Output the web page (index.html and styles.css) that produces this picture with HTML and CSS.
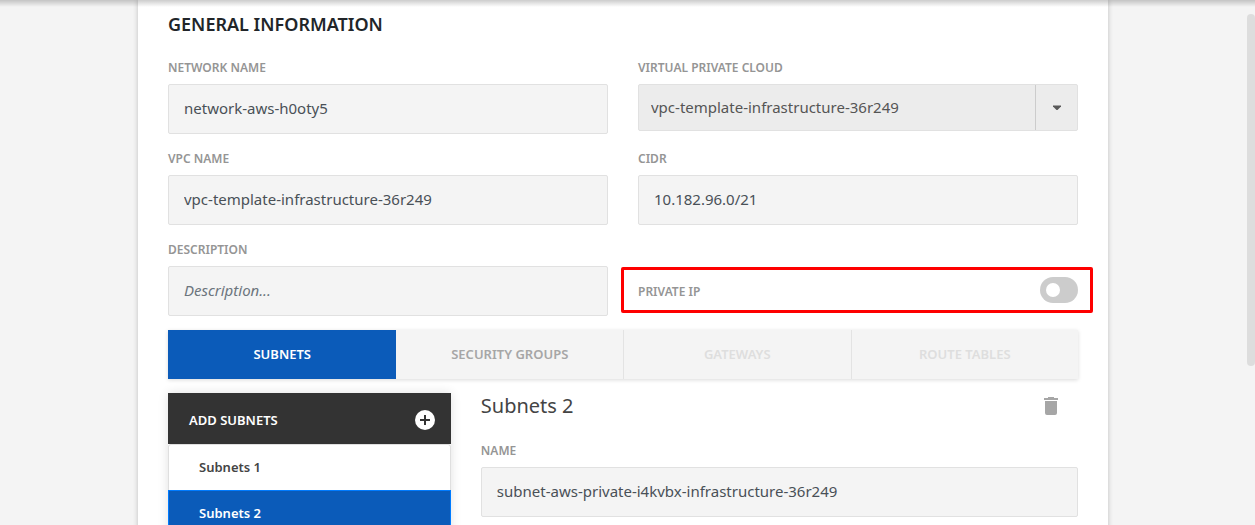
FILE: index.html
```html
<!DOCTYPE html>
<html lang="en">
<head>
<meta charset="utf-8">
<title>General information</title>
<link rel="stylesheet" href="styles.css">
</head>
<body>
<div class="page">
  <main class="card">
    <h2 class="title">General information</h2>
    <form class="fields">
      <div class="field">
        <label class="label" for="network">Network name</label>
        <input class="input" id="network" type="text" value="network-aws-h0oty5">
      </div>
      <div class="field">
        <label class="label" for="vpc">Virtual private cloud</label>
        <div class="picker">
          <select class="select" id="vpc"><option>vpc-template-infrastructure-36r249</option></select>
          <span class="picker-arrow"><svg width="10" height="6" viewBox="0 0 10 6"><path d="M1 .5h8v1L5.500 5h-1L1 1.500z" fill="#595959"/></svg></span>
        </div>
      </div>
      <div class="field">
        <label class="label" for="vpcname">VPC name</label>
        <input class="input" id="vpcname" type="text" value="vpc-template-infrastructure-36r249">
      </div>
      <div class="field">
        <label class="label" for="cidr">CIDR</label>
        <input class="input" id="cidr" type="text" value="10.182.96.0/21">
      </div>
      <div class="field">
        <label class="label" for="description">Description</label>
        <input class="input" id="description" type="text" placeholder="Description...">
      </div>
      <div class="toggle-row">
        <label class="toggle-label" for="private">Private IP</label>
        <input class="toggle" id="private" type="checkbox" role="switch">
      </div>
    </form>
    <nav class="tabs">
      <button class="tab tab-active" type="button">Subnets</button>
      <button class="tab" type="button">Security groups</button>
      <button class="tab" type="button" disabled>Gateways</button>
      <button class="tab" type="button" disabled>Route tables</button>
    </nav>
    <div class="panel">
      <aside class="list">
        <button class="add" type="button">Add subnets
          <svg width="20" height="20" viewBox="0 0 20 20"><circle cx="10" cy="10" r="10" fill="#fff"/><path d="M10 5v10M5 10h10" stroke="#333" stroke-width="2"/></svg>
        </button>
        <button class="item" type="button">Subnets 1</button>
        <button class="item item-active" type="button">Subnets 2</button>
      </aside>
      <section class="detail">
        <div class="detail-head">
          <h3 class="detail-title">Subnets 2</h3>
          <button class="delete" type="button" aria-label="Delete subnet"><svg width="14" height="18" viewBox="0 0 14 18"><path d="M0 1h4V0h6v1h4v2H0zM1 4h12v12a2 2 0 0 1-2 2H3a2 2 0 0 1-2-2z" fill="#a6a6a6"/></svg></button>
        </div>
        <label class="label" for="name">Name</label>
        <input class="input" id="name" type="text" value="subnet-aws-private-i4kvbx-infrastructure-36r249">
      </section>
    </div>
  </main>
  <div class="top-shadow"></div>
  <div class="scroll-thumb"></div>
</div>
</body>
</html>
```
FILE: styles.css
```css
* { box-sizing: border-box; }
body { margin: 0; background: #f4f4f4; }
body, button, input, select { font-family: "Noto Sans", "Open Sans", sans-serif; }
button { border: 0; padding: 0; margin: 0; background: none; cursor: pointer; }
svg { display: block; }

.page { position: relative; height: 100vh; padding-right: 9px; overflow: hidden; }
.card {
  max-width: 970px;
  min-height: 100%;
  margin: 0 auto;
  padding: 12px 30px 30px;
  background: #fff;
  box-shadow: 0 0 5px rgba(0, 0, 0, .22);
}
.title {
  margin: 0 0 23px;
  font-size: 18px;
  line-height: 24px;
  font-weight: 600;
  color: #212529;
  text-transform: uppercase;
}
.fields { display: grid; grid-template-columns: 1fr 1fr; gap: 16px 30px; }
.label, .toggle-label {
  display: block;
  font-size: 12px;
  line-height: 18px;
  font-weight: 600;
  color: #959595;
  text-transform: uppercase;
}
.label { margin-bottom: 7px; }
.toggle-label { padding-top: 3px; }
.input {
  display: block;
  width: 100%;
  height: 50px;
  padding: 0 15px 2px;
  border: 1px solid #e1e1e1;
  border-radius: 2px;
  background: #f4f4f4;
  color: #495057;
  font-size: 15px;
}
.input::placeholder { color: #6c757d; font-style: italic; opacity: 1; }
.picker {
  display: flex;
  height: 47px;
  border: 1px solid #e1e1e1;
  border-radius: 2px;
  background: #ececec;
}
.select {
  flex: 1;
  min-width: 0;
  padding: 0 12px 2px;
  border: 0;
  appearance: none;
  background: none;
  color: #555;
  font-size: 15px;
}
.picker-arrow {
  display: flex;
  align-items: center;
  justify-content: center;
  width: 42px;
  border-left: 1px solid #ccc;
}
.toggle-row {
  position: relative;
  display: flex;
  align-items: center;
  justify-content: space-between;
  align-self: end;
  height: 52px;
}
.toggle-row::after {
  content: "";
  position: absolute;
  inset: 3px -15px 3px -17px;
  border: 3px solid #fe0000;
  border-radius: 2px;
  pointer-events: none;
}
.toggle {
  display: flex;
  align-items: center;
  width: 38px;
  height: 26px;
  margin: 0;
  padding: 0 6px;
  border-radius: 13px;
  appearance: none;
  background: #ccc;
}
.toggle::before { content: ""; width: 14px; height: 14px; border-radius: 50%; background: #fff; }

.tabs {
  display: grid;
  grid-template-columns: repeat(4, 1fr);
  margin: 14px 0;
  background: #f4f4f4;
  box-shadow: 0 1px 4px rgba(0, 0, 0, .15);
}
.tab {
  height: 49px;
  padding-bottom: 2px;
  border-left: 1px solid #e3e3e3;
  font-size: 13px;
  font-weight: 600;
  color: #a6a6a6;
  text-transform: uppercase;
}
.tab:disabled { color: #dedede; }
.tab-active { border-left-color: #0b5bb9; background: #0b5bb9; color: #fff; }
.tab-active + .tab { border-left-color: #f4f4f4; }

.panel { display: grid; grid-template-columns: minmax(0, 9fr) minmax(0, 19fr); gap: 30px; align-items: start; }
.list { box-shadow: 0 0 10px rgba(0, 0, 0, .12); background: #fff; }
.add {
  display: flex;
  align-items: center;
  justify-content: space-between;
  width: 100%;
  height: 51px;
  padding: 2px 16px 0 21px;
  background: #333;
  color: #fff;
  font-size: 13px;
  font-weight: 600;
  text-transform: uppercase;
}
.item {
  display: block;
  width: 100%;
  height: 46px;
  padding: 0 30px 2px;
  border: 1px solid #dfdfdf;
  border-bottom: 0;
  border-radius: 3px 3px 0 0;
  font-size: 13px;
  font-weight: 600;
  color: #444;
  text-align: left;
}
.item-active { border-color: #007bff; border-radius: 0; background: #0b5bb9; color: #fff; }
.detail-head {
  display: flex;
  align-items: center;
  justify-content: space-between;
  margin-bottom: 23px;
  padding-right: 20px;
}
.detail-title { margin: 0; font-size: 20px; line-height: 26px; font-weight: 400; color: #444; }

.top-shadow {
  position: absolute;
  inset: 0 0 auto;
  height: 7px;
  background: linear-gradient(rgba(0, 0, 0, .2), rgba(0, 0, 0, 0));
  pointer-events: none;
}
.scroll-thumb {
  position: absolute;
  top: 14px;
  right: 0;
  width: 8px;
  height: 67%;
  border-radius: 4px;
  background: #ddd;
}
```
